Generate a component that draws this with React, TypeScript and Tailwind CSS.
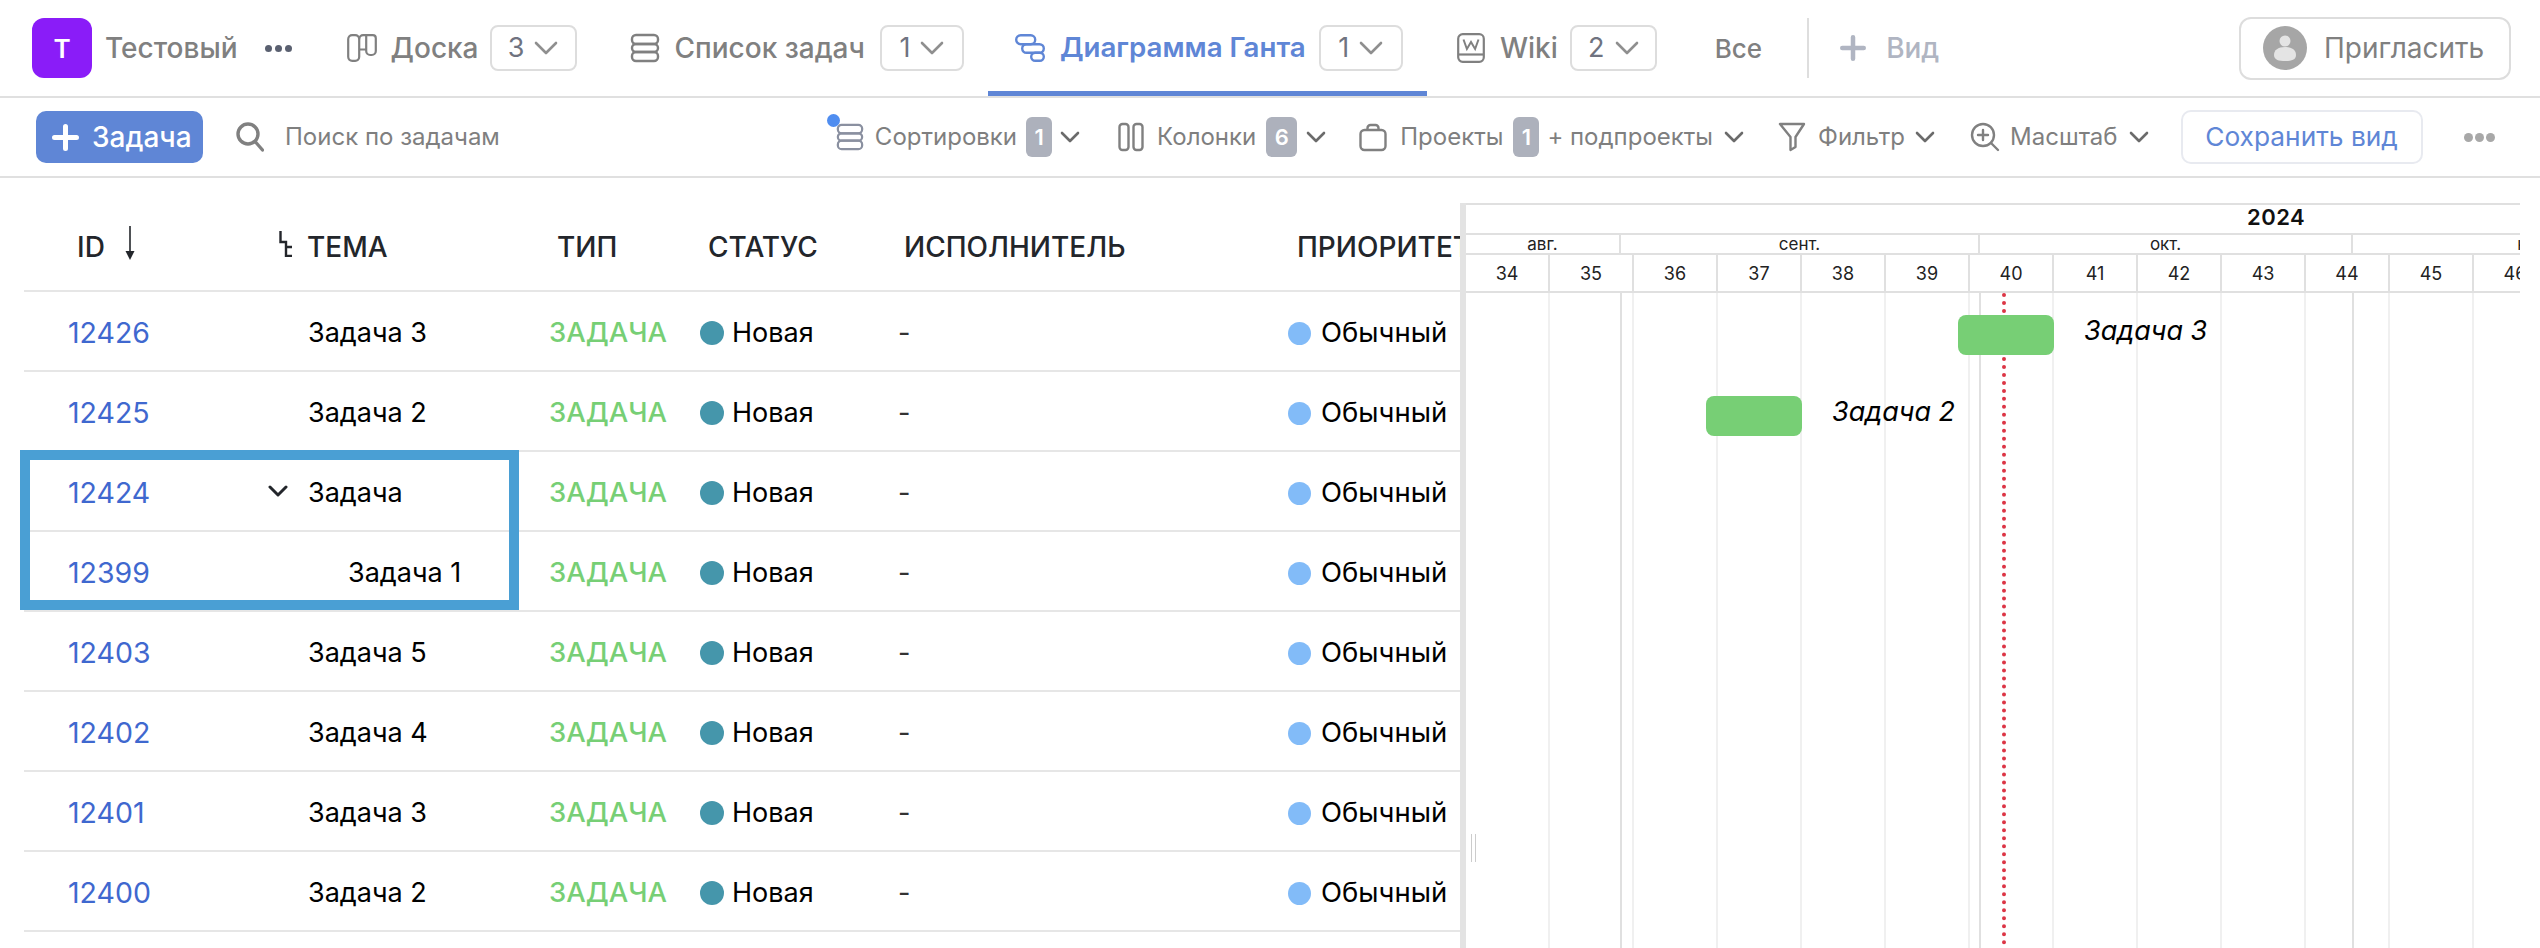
const rows = [
	{ id: "12426", title: "Задача 3" },
	{ id: "12425", title: "Задача 2" },
	{ id: "12424", title: "Задача", open: true },
	{ id: "12399", title: "Задача 1", child: true },
	{ id: "12403", title: "Задача 5" },
	{ id: "12402", title: "Задача 4" },
	{ id: "12401", title: "Задача 3" },
	{ id: "12400", title: "Задача 2" },
];

const weeks = [34, 35, 36, 37, 38, 39, 40, 41, 42, 43, 44, 45, 46];

function Chevron({ w = 20, color = "#6b6b6b", sw = 2.6, className = "" }: { w?: number; color?: string; sw?: number; className?: string }) {
	const h = Math.round(w * 0.6);
	return (
		<svg className={className} width={w} height={h} viewBox={`0 0 ${w} ${h}`} fill="none" stroke={color} strokeWidth={sw} strokeLinecap="round" strokeLinejoin="round">
			<path d={`M2 2 ${w / 2} ${h - 2} ${w - 2} 2`} />
		</svg>
	);
}

function PlusIcon({ size, color, sw, className = "" }: { size: number; color: string; sw: number; className?: string }) {
	const e = sw / 2;
	return (
		<svg className={className} width={size} height={size} viewBox={`0 0 ${size} ${size}`} fill="none" stroke={color} strokeWidth={sw} strokeLinecap="round">
			<path d={`M${size / 2} ${e}V${size - e}M${e} ${size / 2}H${size - e}`} />
		</svg>
	);
}

function Counter({ n, className }: { n: number; className: string }) {
	return (
		<div className={`flex h-[46px] items-center justify-center gap-[10px] rounded-[8px] border-2 border-[#dddddd] text-[27px] font-normal text-[#6f7380] ${className}`}>
			{n}
			<Chevron w={24} color="#8f8f8f" sw={2.6} />
		</div>
	);
}

function Badge({ n, className }: { n: number; className: string }) {
	return (
		<span className={`flex h-[40px] items-center justify-center rounded-[6px] bg-[#adb1bc] text-[22px] font-semibold text-white ${className}`}>
			{n}
		</span>
	);
}

function BoardIcon() {
	return (
		<svg width="30" height="28" viewBox="0 0 30 28" fill="none" stroke="#808080" strokeWidth="2.2">
			<rect x="1.2" y="1.2" width="11" height="25.6" rx="4" />
			<path d="M12.2 5.2a4 4 0 0 1 4-4h9.6a3 3 0 0 1 3 3V17a4 4 0 0 1-4 4h-1.6a4 4 0 0 1-4-4V1.2M19.2 15.5h-7" />
		</svg>
	);
}

function ListIcon({ color = "#808080", size = 30 }: { color?: string; size?: number }) {
	return (
		<svg width={size} height={size} viewBox="0 0 30 30" fill="none" stroke={color} strokeWidth="2.4">
			<rect x="2" y="2" width="26" height="9" rx="4" />
			<rect x="2" y="11" width="26" height="8" rx="4" />
			<rect x="2" y="19" width="26" height="9" rx="4" />
		</svg>
	);
}

function GanttIcon() {
	return (
		<svg width="30" height="28" viewBox="0 0 30 28" fill="none" stroke="#5f86d6" strokeWidth="2.4">
			<rect x="1.2" y="1.2" width="19" height="9" rx="4.5" />
			<rect x="7.2" y="10.2" width="21.6" height="8.6" rx="4.3" />
			<rect x="16.2" y="18.8" width="12.6" height="8" rx="4" />
		</svg>
	);
}

function WikiIcon() {
	return (
		<svg width="28" height="30" viewBox="0 0 28 30" fill="none" stroke="#808080" strokeWidth="2.2">
			<rect x="1.2" y="1.2" width="25.6" height="27.6" rx="4.5" />
			<path d="M1.2 21.5h25.6" />
			<path d="M6.5 6.5l3.4 9.5 4.1-7 4.1 7 3.4-9.5" strokeWidth="2" />
		</svg>
	);
}

function TopBar() {
	return (
		<div className="flex h-[98px] items-center border-b-2 border-[#e0e0e0] pl-[32px] pr-[29px] text-[28px] font-medium text-[#808080]">
			<div className="flex h-[60px] w-[60px] items-center justify-center rounded-[12px] bg-[#8a1cf8] text-[26px] font-semibold text-white">
				Т
			</div>
			<span className="ml-[13px]">Тестовый</span>
			<div className="ml-[27px] flex gap-[3px]">
				<span className="h-[7px] w-[7px] rounded-full bg-[#5a6070]" />
				<span className="h-[7px] w-[7px] rounded-full bg-[#5a6070]" />
				<span className="h-[7px] w-[7px] rounded-full bg-[#5a6070]" />
			</div>
			<div className="ml-[55px] flex">
				<BoardIcon />
			</div>
			<span className="ml-[14px]">Доска</span>
			<Counter n={3} className="ml-[11px] w-[87px]" />
			<div className="ml-[53px] flex">
				<ListIcon />
			</div>
			<span className="ml-[15px]">Список задач</span>
			<Counter n={1} className="ml-[15px] w-[84px]" />
			<div className="relative ml-[24px] flex h-[96px] w-[439px] items-center pl-[27px] text-[#5f86d6]">
				<GanttIcon />
				<span className="ml-[15px] text-[27.7px] font-semibold">Диаграмма Ганта</span>
				<Counter n={1} className="ml-[13px] w-[84px]" />
				<div className="absolute inset-x-0 bottom-0 h-[5px] bg-[#5f86d6]" />
			</div>
			<div className="ml-[30px] flex">
				<WikiIcon />
			</div>
			<span className="ml-[15px]">Wiki</span>
			<Counter n={2} className="ml-[12px] w-[87px]" />
			<span className="ml-[58px] text-[26px]">Все</span>
			<div className="ml-[45px] h-[60px] w-[2px] bg-[#dedede]" />
			<PlusIcon size={26} color="#b0b5c2" sw={4.5} className="ml-[31px]" />
			<span className="ml-[20px] text-[#b0b5c2]">Вид</span>
			<div className="ml-auto flex h-[63px] w-[272px] items-center rounded-[12px] border-2 border-[#dddddd] pl-[22px] font-normal">
				<svg width="44" height="44" viewBox="0 0 44 44">
					<circle cx="22" cy="22" r="22" fill="#a6a6a6" />
					<circle cx="22" cy="15" r="5.5" fill="#e4e4e4" />
					<path d="M11 29c0-5 4-8 11-8s11 3 11 8-5 6-11 6-11-1-11-6z" fill="#e4e4e4" />
				</svg>
				<span className="ml-[17px]">Пригласить</span>
			</div>
		</div>
	);
}

function Toolbar() {
	return (
		<div className="flex h-[80px] items-center border-b-2 border-[#e0e0e0] pl-[36px] text-[24px] text-[#7f7f7f]">
			<div className="flex h-[52px] w-[167px] items-center rounded-[10px] bg-[#5f86d6] pl-[16px] text-[28px] font-medium text-white">
				<PlusIcon size={27} color="#ffffff" sw={5} />
				<span className="ml-[13px]">Задача</span>
			</div>
			<svg className="ml-[33px]" width="28" height="30" viewBox="0 0 28 30" fill="none" stroke="#808080" strokeWidth="3.4" strokeLinecap="round">
				<circle cx="12" cy="12" r="10" />
				<path d="M19.5 20l7 8" />
			</svg>
			<span className="ml-[21px]">Поиск по задачам</span>
			<div className="relative ml-[336px] flex">
				<ListIcon color="#8a90a0" size={28} />
				<span className="absolute -left-[9px] -top-[9px] h-[13px] w-[13px] rounded-full bg-[#4f8df0]" />
			</div>
			<span className="ml-[11px]">Сортировки</span>
			<Badge n={1} className="ml-[9px] w-[26px]" />
			<Chevron className="ml-[8px]" />
			<svg className="ml-[38px]" width="26" height="30" viewBox="0 0 26 30" fill="none" stroke="#808080" strokeWidth="2.4">
				<rect x="1.5" y="2" width="9" height="26" rx="3" />
				<rect x="15.5" y="2" width="9" height="26" rx="3" />
			</svg>
			<span className="ml-[13px]">Колонки</span>
			<Badge n={6} className="ml-[10px] w-[31px]" />
			<Chevron className="ml-[9px]" />
			<svg className="ml-[33px]" width="28" height="30" viewBox="0 0 28 30" fill="none" stroke="#808080" strokeWidth="2.4">
				<rect x="1.5" y="8" width="25" height="20" rx="4" />
				<path d="M8.5 8V6a3 3 0 0 1 3-3h5a3 3 0 0 1 3 3v2" />
			</svg>
			<span className="ml-[13px]">Проекты</span>
			<Badge n={1} className="ml-[10px] w-[26px]" />
			<span className="ml-[8px]">+ подпроекты</span>
			<Chevron className="ml-[11px]" />
			<svg className="ml-[34px]" width="28" height="30" viewBox="0 0 28 30" fill="none" stroke="#808080" strokeWidth="2.4" strokeLinejoin="round">
				<path d="M2 2h24l-8.5 13v10l-5 3V15z" />
			</svg>
			<span className="ml-[12px]">Фильтр</span>
			<Chevron className="ml-[10px]" />
			<svg className="ml-[35px]" width="30" height="30" viewBox="0 0 30 30" fill="none" stroke="#808080" strokeWidth="2.4" strokeLinecap="round">
				<circle cx="13" cy="13" r="11" />
				<path d="M21 21l7 7M13 8v10M8 13h10" />
			</svg>
			<span className="ml-[10px]">Масштаб</span>
			<Chevron className="ml-[11px]" />
			<div className="ml-[32px] flex h-[54px] w-[242px] items-center justify-center rounded-[10px] border-2 border-[#e8eaf0] text-[26.3px] text-[#5f86d6]">
				Сохранить вид
			</div>
			<div className="ml-[41px] flex gap-[2px]">
				<span className="h-[9px] w-[9px] rounded-full bg-[#a8a8a8]" />
				<span className="h-[9px] w-[9px] rounded-full bg-[#a8a8a8]" />
				<span className="h-[9px] w-[9px] rounded-full bg-[#a8a8a8]" />
			</div>
		</div>
	);
}

function TaskTable() {
	return (
		<div className="relative w-[1460px] shrink-0 overflow-hidden pl-[24px] text-[27px] text-black">
			<div className="grid h-[114px] grid-cols-[283px_250px_151px_196px_393px_300px] items-center whitespace-nowrap border-b-2 border-[#e6e6e6] pt-[26px] text-[28px] font-medium text-[#23262b]">
				<div className="flex items-center pl-[53px]">
					ID
					<svg className="-mt-[8px] ml-[19px]" width="12" height="34" viewBox="0 0 12 34" fill="#23262b">
						<path d="M5.2 0h1.6v26H5.2z" />
						<path d="M1.5 25h9L6 34z" />
					</svg>
				</div>
				<div className="relative">
					ТЕМА
					<svg className="absolute -left-[28px] top-[5px]" width="13" height="26" viewBox="0 0 13 26" fill="none" stroke="#23262b" strokeWidth="2.4">
						<path d="M1.5 0v11h5.5v14h6M7 16h6" />
					</svg>
				</div>
				<div>ТИП</div>
				<div>СТАТУС</div>
				<div>ИСПОЛНИТЕЛЬ</div>
				<div>ПРИОРИТЕТ</div>
			</div>
			{rows.map((row) => (
				<div key={row.id} className="grid h-[80px] grid-cols-[284px_241px_151px_198px_390px_300px] items-center whitespace-nowrap border-b-2 border-[#e6e6e6] pt-[4px]">
					<div className="pl-[44px] text-[28.5px] text-[#3f68cf]">{row.id}</div>
					<div className="relative">
						{row.open && (
							<Chevron w={20} color="#23262b" sw={3} className="absolute -left-[40px] top-[12px]" />
						)}
						<span className={row.child ? "pl-[40px]" : ""}>{row.title}</span>
					</div>
					<div className="text-[27.5px] font-medium text-[#77cf75]">ЗАДАЧА</div>
					<div className="flex items-center gap-[8px]">
						<span className="h-[24px] w-[24px] rounded-full bg-[#4596ab]" />
						Новая
					</div>
					<div className="text-[#333333]">-</div>
					<div className="flex items-center gap-[10px] text-[27.5px]">
						<span className="h-[23px] w-[23px] rounded-full bg-[#82bbf8]" />
						Обычный
					</div>
				</div>
			))}
			{/* рамка-выделение поверх строк */}
			<div className="absolute left-[20px] top-[272px] h-[160px] w-[499px] border-[10px] border-[#4a9fd4]" />
		</div>
	);
}

function Gantt() {
	return (
		<div className="relative mt-[25px] w-[1060px] shrink-0 overflow-hidden border-l-[6px] border-[#e3e3e3] text-[#222222]">
			<div className="h-[32px] border-y-2 border-[#e0e0e0] pl-[781px] text-[22px] font-semibold leading-[25px] tracking-[0.5px] text-[#111111]">
				2024
			</div>
			<div className="flex h-[20px] items-center border-b-2 border-[#e0e0e0] text-[17px] leading-none">
				<div className="flex h-full w-[155px] shrink-0 items-center justify-center border-r-2 border-[#e0e0e0]">авг.</div>
				<div className="flex h-full w-[359px] shrink-0 items-center justify-center border-r-2 border-[#e0e0e0]">сент.</div>
				<div className="flex h-full w-[373px] shrink-0 items-center justify-center border-r-2 border-[#e0e0e0]">окт.</div>
				<div className="flex h-full w-[373px] shrink-0 items-center justify-center">нояб.</div>
			</div>
			<div className="flex h-[38px] border-b-2 border-[#e0e0e0] text-[18px]">
				{weeks.map((w) => (
					<div key={w} className="flex w-[84px] shrink-0 items-center justify-center border-r-2 border-[#e0e0e0]">
						{w}
					</div>
				))}
			</div>
			<div className="relative flex h-[700px]">
				{weeks.map((w) => (
					<div key={w} className="h-full w-[84px] shrink-0 border-r-2 border-[#f0f0f0]" />
				))}
				<div className="absolute inset-y-0 left-[154px] w-[2px] bg-[#e0e0e0]" />
				<div className="absolute inset-y-0 left-[513px] w-[2px] bg-[#e0e0e0]" />
				<div className="absolute inset-y-0 left-[886px] w-[2px] bg-[#e0e0e0]" />
				<div className="absolute inset-y-0 left-[536px] border-l-4 border-dotted border-[#dc3545]" />
				<div className="absolute left-[492px] top-[22px] h-[40px] w-[96px] rounded-[8px] bg-[#77cf75]" />
				<div className="absolute left-[618px] top-[18px] whitespace-nowrap text-[27px] italic text-black">Задача 3</div>
				<div className="absolute left-[240px] top-[103px] h-[40px] w-[96px] rounded-[8px] bg-[#77cf75]" />
				<div className="absolute left-[366px] top-[99px] whitespace-nowrap text-[27px] italic text-black">Задача 2</div>
				<div className="absolute left-[5px] top-[541px] h-[28px] w-[5px] border-x border-[#cccccc]" />
			</div>
		</div>
	);
}

export default function App() {
	return (
		<div className="h-[948px] w-[2540px] overflow-hidden bg-white font-['Inter','Noto_Sans',sans-serif]">
			<TopBar />
			<Toolbar />
			<div className="flex">
				<TaskTable />
				<Gantt />
			</div>
		</div>
	);
}
